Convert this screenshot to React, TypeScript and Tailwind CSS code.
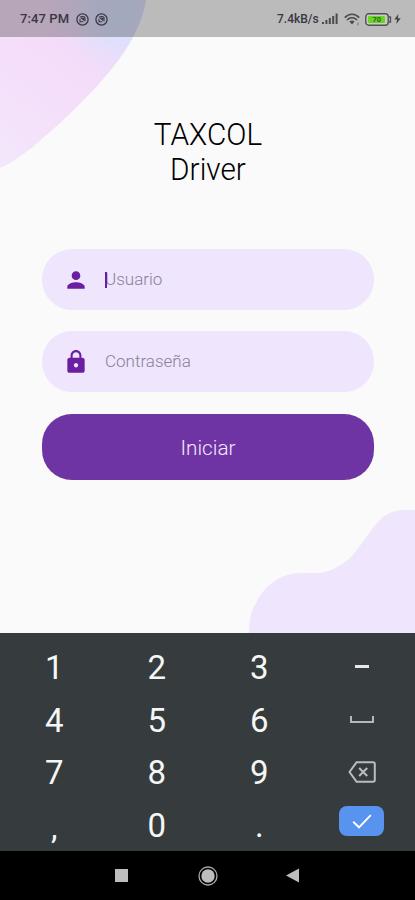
import type { ReactNode } from "react";
import { MdPerson, MdLock } from "react-icons/md";

const keyRows = [
  ["1", "2", "3", "minus"],
  ["4", "5", "6", "space"],
  ["7", "8", "9", "delete"],
  [",", "0", ".", "done"],
];

const cornerPath = "M0 0H146C144 12 139 26 133 37C124 54 112 69 99 84C86 98 73 111 59 124C41 140 21 159 0 168Z";

function CornerBlob() {
  return (
    <svg className="absolute left-0 top-0" width="150" height="172" viewBox="0 0 150 172">
      <defs>
        <radialGradient id="blue" gradientUnits="userSpaceOnUse" cx="122" cy="12" r="85">
          <stop offset="0" stopColor="#d8e2fd" />
          <stop offset="0.35" stopColor="#dee0fc" />
          <stop offset="1" stopColor="#f4dcf9" stopOpacity="0" />
        </radialGradient>
        <linearGradient id="pink" gradientUnits="userSpaceOnUse" x1="85" y1="60" x2="0" y2="165">
          <stop offset="0" stopColor="#f5dcf9" />
          <stop offset="0.5" stopColor="#f4e0fa" />
          <stop offset="1" stopColor="#f2e7fb" />
        </linearGradient>
      </defs>
      <path d={cornerPath} fill="url(#pink)" />
      <path d={cornerPath} fill="url(#blue)" />
    </svg>
  );
}

function BottomBlob() {
  return (
    <svg className="absolute bottom-0 right-0" width="167" height="125" viewBox="248 508 167 125">
      <path
        d="M249 633C249 619 252 608 256 603C264 586 280 573 302 573H318C328 573 340 566 349 559C361 547 370 529 381 519C389 512 396 510 405 510H415V633Z"
        fill="#efe5fd"
      />
    </svg>
  );
}

function NotificationIcon() {
  return (
    <svg width="13" height="13" viewBox="0 0 13 13" fill="none" stroke="#3c3746">
      <circle cx="6.5" cy="6.5" r="5.6" strokeWidth="1.3" />
      <path d="M4 4.3C5 3.2 8 3.1 9 4.6V8.2M4 5.8V8.8H7.2" strokeWidth="1.1" />
      <path d="M5 5L8 7.6V5.2Z" fill="#3c3746" strokeWidth="0.8" />
    </svg>
  );
}

function StatusBar() {
  return (
    <div className="relative flex h-[37px] items-center justify-between bg-black/25 pl-5 pr-[14px] text-[#3a3740]">
      <div className="flex items-center pt-px">
        <span className="w-[56px] whitespace-nowrap text-[13px] font-medium tracking-[0.1px]">7:47 PM</span>
        <NotificationIcon />
        <span className="w-[6px]" />
        <NotificationIcon />
      </div>
      <div className="flex items-center pt-px">
        <span className="w-[45px] whitespace-nowrap text-[12px] font-medium">7.4kB/s</span>
        <svg width="16" height="12" viewBox="0 0 16 12" fill="#4b4b4b">
          <rect x="0" y="9" width="2" height="2" />
          <rect x="3.4" y="7" width="2" height="4" />
          <rect x="6.8" y="5" width="2" height="6" />
          <rect x="10.2" y="3" width="2" height="8" />
          <rect x="13.6" y="0.5" width="2" height="10.5" />
        </svg>
        <svg className="ml-[6px]" width="17" height="13" viewBox="0 0 17 13" fill="none" stroke="#4b4b4b" strokeWidth="1.6">
          <path d="M0.8 4.6C5 0.2 11 0.2 15.2 4.6" />
          <path d="M3 7C6 4 10 4 13 7" />
          <path d="M5.4 8.6C7 7.2 9 7.2 10.6 8.6L8 11.4Z" fill="#4b4b4b" stroke="none" />
          <path d="M14 9.5V12.5" stroke="#888" strokeWidth="1.4" />
        </svg>
        <svg className="ml-[4px]" width="27" height="13" viewBox="0 0 27 13">
          <rect x="0.8" y="0.8" width="22.4" height="11.4" rx="3" fill="#c9cdc4" stroke="#505050" strokeWidth="1.4" />
          <rect x="3" y="3" width="17" height="7" rx="1" fill="#67d426" />
          <path d="M24 4H25.5V9H24" fill="none" stroke="#505050" strokeWidth="1.3" />
          <text x="11.7" y="9.2" textAnchor="middle" fontSize="7.5" fontWeight="700" fill="#36651f">
            70
          </text>
        </svg>
        <svg className="ml-[2px]" width="7" height="10" viewBox="0 0 7 10" fill="#444">
          <path d="M4.4 0L0.3 5.6H3L2.4 10L6.7 4.2H3.9Z" />
        </svg>
      </div>
    </div>
  );
}

function Field({ icon, label, focused }: { icon: ReactNode; label: string; focused?: boolean }) {
  return (
    <div className="flex h-[61px] items-center rounded-[30px] bg-[#efe5fd] pl-[21px]">
      <span className="w-[42px] text-[#6a1fa0]">{icon}</span>
      <span className="relative whitespace-nowrap text-[17px] font-light text-[#8b8196]">
        {focused && <span className="absolute left-0 top-[5px] h-[16px] w-[2px] bg-[#6a1fa0]" />}
        {label}
      </span>
    </div>
  );
}

function Key({ value }: { value: string }) {
  if (value === "minus") {
    return <span className="h-[3px] w-[14px] bg-[#e6e8e8]" />;
  }
  if (value === "space") {
    return <span className="h-[7px] w-6 border-2 border-t-0 border-[#b4b8b9]" />;
  }
  if (value === "delete") {
    return (
      <svg width="28" height="22" viewBox="0 0 28 22" fill="none" stroke="#b9bdbe" strokeWidth="2">
        <path d="M8.5 1.3H25C26.2 1.3 26.8 2 26.8 3V19C26.8 20 26.2 20.7 25 20.7H8.5L1.5 11Z" strokeLinejoin="round" />
        <path d="M11.2 7L19.2 15M19.2 7L11.2 15" />
      </svg>
    );
  }
  if (value === "done") {
    return (
      <span className="mb-[7px] flex h-[30px] w-[45px] items-center justify-center rounded-[8px] bg-[#5793ef]">
        <svg width="20" height="15" viewBox="0 0 20 15" fill="none" stroke="#fff" strokeWidth="1.9">
          <path d="M1.2 7.8L7 13.3L18.8 1.2" />
        </svg>
      </span>
    );
  }
  if (value === ",") {
    return <span className="pt-[6px] text-[33px] leading-none">,</span>;
  }
  return <span className="pt-[2px] text-[33px] leading-none">{value}</span>;
}

function Keyboard() {
  return (
    <div className="flex h-[218px] flex-col bg-[#363c3e] pl-[3px] pr-[2px] pt-[7px] text-[#f5f6f6]">
      {keyRows.map((row) => (
        <div key={row[0]} className="grid flex-1 grid-cols-4">
          {row.map((value) => (
            <div key={value} className="flex items-center justify-center">
              <Key value={value} />
            </div>
          ))}
        </div>
      ))}
    </div>
  );
}

function NavBar() {
  return (
    <div className="flex h-[49px] items-center bg-black pl-[115px]">
      <span className="h-[13px] w-[13px] bg-[#bdbdbd]" />
      <svg className="ml-[70px]" width="20" height="20" viewBox="0 0 20 20">
        <circle cx="10" cy="10" r="9" fill="none" stroke="#aaa" strokeWidth="1.3" />
        <circle cx="10" cy="10" r="6.7" fill="#bdbdbd" />
      </svg>
      <svg className="ml-[68px]" width="13" height="15" viewBox="0 0 13 15">
        <path d="M13 0.5V14.5L0 7.5Z" fill="#bdbdbd" />
      </svg>
    </div>
  );
}

export default function App() {
  return (
    <div className="flex h-[900px] w-[415px] flex-col overflow-hidden bg-[#fafafa] font-[Roboto,sans-serif]">
      <div className="relative h-[633px]">
        <CornerBlob />
        <BottomBlob />
        <StatusBar />
        <div className="relative flex flex-col pl-[42px] pr-[41px]">
          <h1 className="mt-[80px] scale-x-[0.93] text-center text-[32px] font-[350] leading-[34.5px] text-black">
            TAXCOL
            <br />
            Driver
          </h1>
          <div className="mt-[63px] flex flex-col">
            <Field icon={<MdPerson size={26} />} label="Usuario" focused />
            <div className="h-[21px]" />
            <Field icon={<MdLock size={26} />} label="Contraseña" />
            <button className="mt-[22px] h-[66px] rounded-[30px] bg-[#6f34a4] pt-[3px] text-[20.7px] font-light text-[#f3e8fb]">
              Iniciar
            </button>
          </div>
        </div>
      </div>
      <Keyboard />
      <NavBar />
    </div>
  );
}
